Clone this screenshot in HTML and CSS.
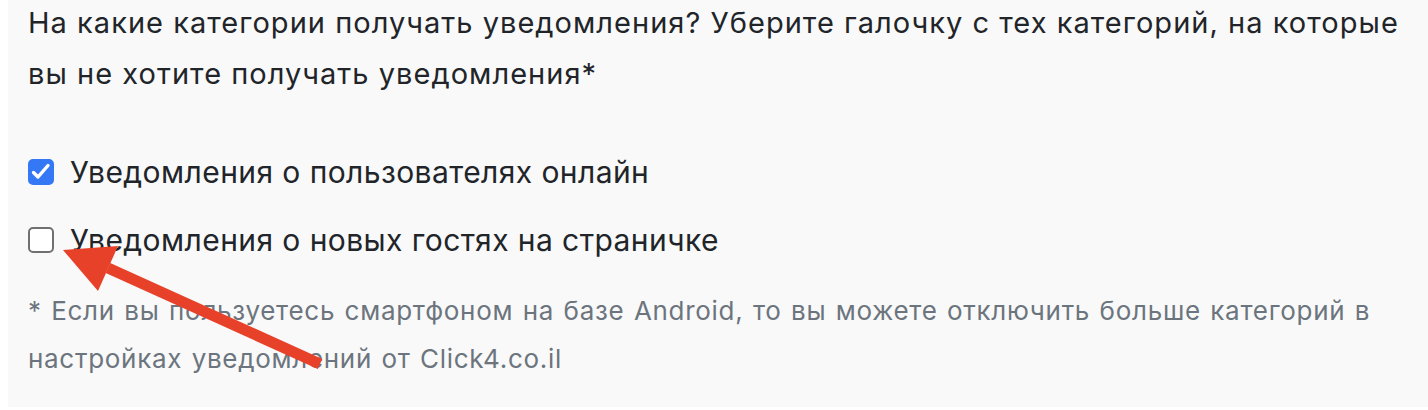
FILE: index.html
```html
<!DOCTYPE html>
<html lang="ru">
<head>
<meta charset="utf-8">
<title>Настройки уведомлений</title>
<link rel="stylesheet" href="styles.css">
</head>
<body>
<div class="page">
  <section class="panel">
    <p class="question">На какие категории получать уведомления? Уберите галочку с тех категорий, на которые вы не хотите получать уведомления*</p>

    <div class="options">
      <label class="option">
        <input type="checkbox" class="check" checked>
        <span class="option-text">Уведомления о пользователях онлайн</span>
      </label>
      <label class="option">
        <input type="checkbox" class="check">
        <span class="option-text">Уведомления о новых гостях на страничке</span>
      </label>
    </div>

    <p class="note">* Если вы пользуетесь смартфоном на базе Android, то вы можете отключить больше категорий в настройках уведомлений от Click4.co.il</p>

    <svg class="pointer" width="1420" height="410" viewBox="0 0 1420 410" aria-hidden="true">
      <line x1="312" y1="367" x2="100" y2="271" stroke="#e8412a" stroke-width="11" />
      <polygon points="55,253 110,249 90,294" fill="#e8412a" />
    </svg>
  </section>
</div>
</body>
</html>
```

FILE: styles.css
```css
html, body {
  margin: 0;
  padding: 0;
  background: #ffffff;
}

.page {
  padding-left: 8px;
  height: 410px;
  overflow: hidden;
}

.panel {
  position: relative;
  background: #f9f9fa;
  height: 410px;
  padding: 0 16px 0 20px;
  box-sizing: border-box;
  font-family: Inter, "Noto Sans", "Liberation Sans", sans-serif;
  color: #212529;
}

.question {
  margin: -3px 0 0;
  font-size: 29px;
  letter-spacing: 1.03px;
  line-height: 51px;
}

.options {
  margin-top: 53px;
  display: flex;
  flex-direction: column;
  gap: 28px;
}

.option {
  display: flex;
  align-items: center;
  gap: 16px;
  font-size: 30px;
  letter-spacing: 0.42px;
  line-height: 40px;
}

.check {
  appearance: none;
  -webkit-appearance: none;
  margin: 0;
  width: 26px;
  height: 26px;
  flex: none;
  box-sizing: border-box;
  border: 2px solid #707070;
  border-radius: 5px;
  background: #ffffff;
}

.check:checked {
  border-color: #3478f6;
  background-color: #3478f6;
  background-image: url("data:image/svg+xml,%3Csvg xmlns='http://www.w3.org/2000/svg' viewBox='0 0 22 22'%3E%3Cpath d='M3.5 11.5 L8 16 L18 4.5' fill='none' stroke='white' stroke-width='3.4' stroke-linecap='round' stroke-linejoin='round'/%3E%3C/svg%3E");
  background-size: 22px 22px;
  background-position: center;
  background-repeat: no-repeat;
}

.note {
  margin: 27px 0 0;
  font-size: 26px;
  letter-spacing: 0.7px;
  word-spacing: 1.5px;
  line-height: 48px;
  color: #6c757d;
}

.pointer {
  position: absolute;
  left: 0;
  top: 0;
  pointer-events: none;
}
```
